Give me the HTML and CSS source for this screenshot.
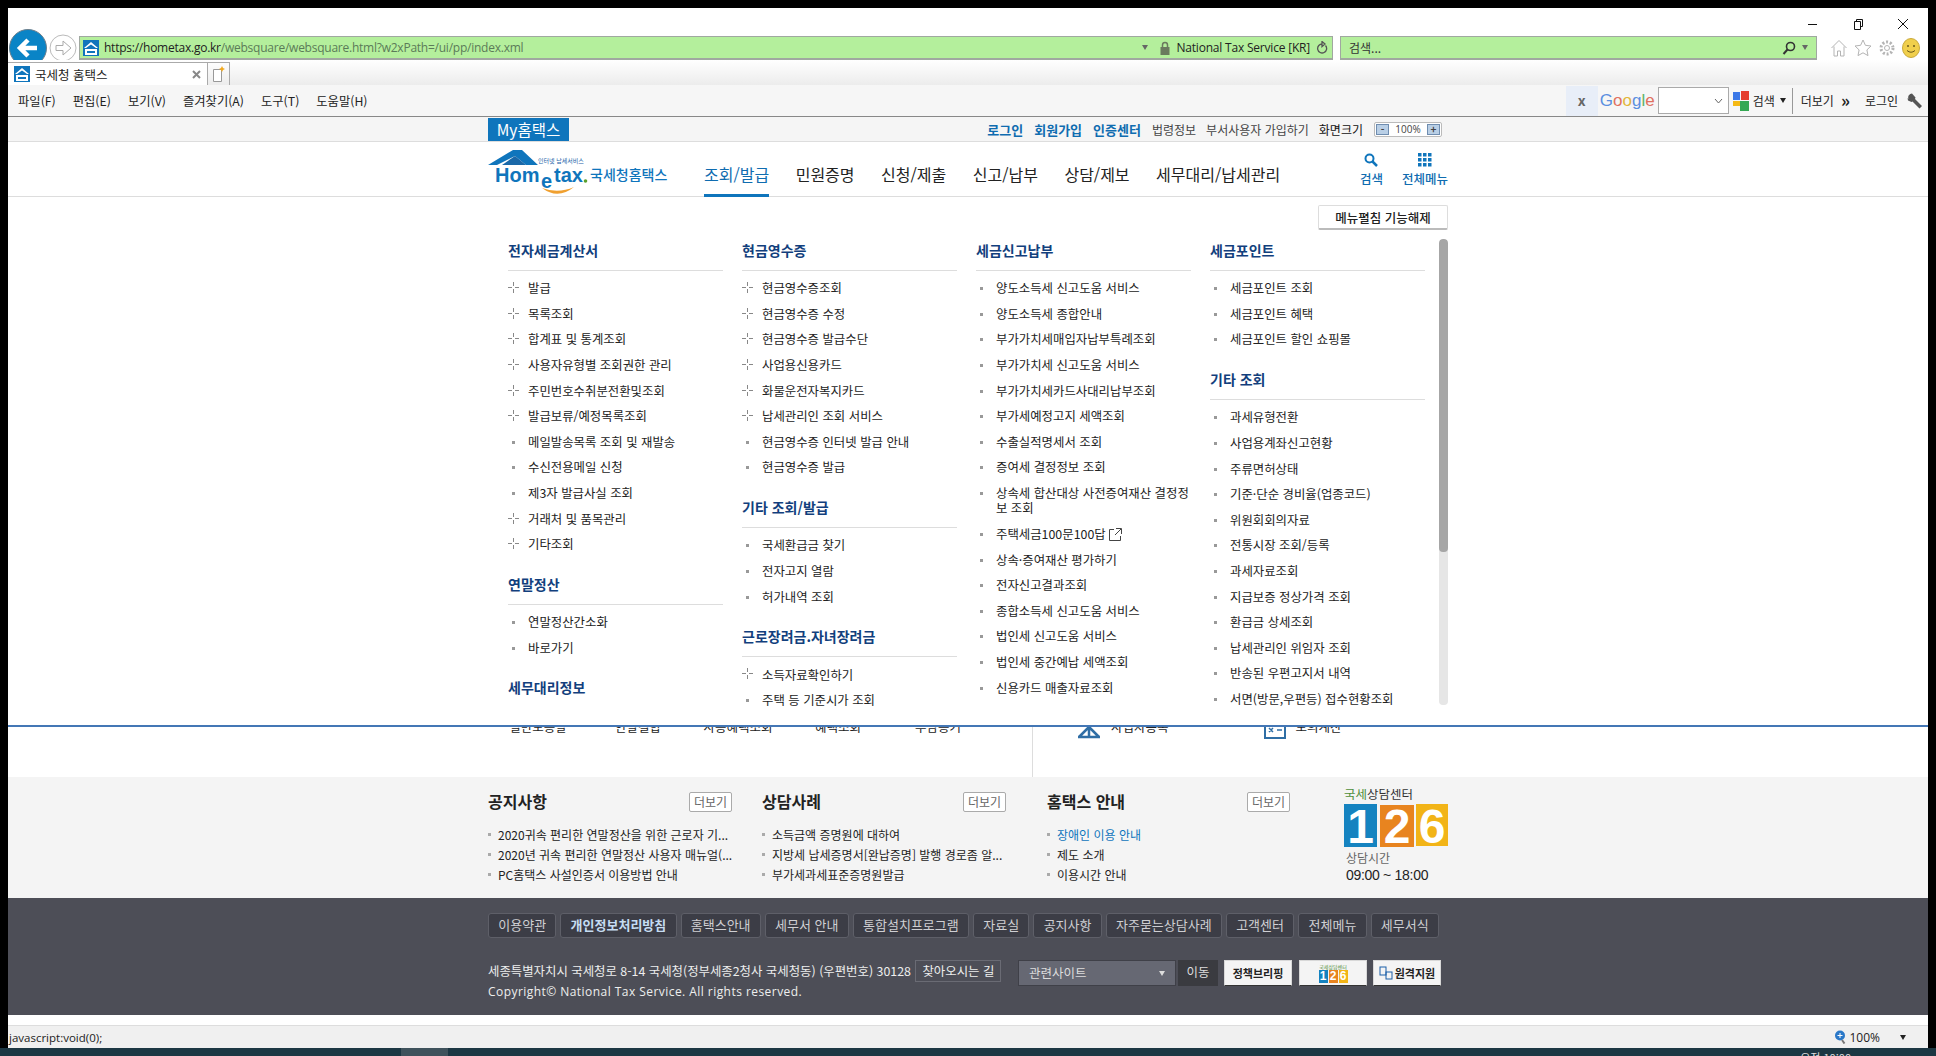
FILE: index.html
```html
<!DOCTYPE html>
<html lang="ko">
<head>
    <meta charset="utf-8">
    <link rel="stylesheet" href="styles.css">
    <title>국세청 홈택스</title>
</head>
<body>
<div class="window">
    <!-- browser chrome -->
    <div class="titlebar">
        <svg class="winbtn" width="12" height="12" viewBox="0 0 12 12"><path d="M1 6.5h9" stroke="#111" fill="none"/></svg>
        <svg class="winbtn" width="12" height="12" viewBox="0 0 12 12"><path d="M2.5 3.5h6v8h-6zM4.5 3.5v-2h6v7h-2" stroke="#111" fill="none"/></svg>
        <svg class="winbtn" width="12" height="12" viewBox="0 0 12 12"><path d="M1 1l10 10M11 1L1 11" stroke="#111" fill="none"/></svg>
    </div>
    <div class="toolbar">
        <svg class="back" width="38" height="38" viewBox="0 0 38 38"><circle cx="19" cy="19" r="18.5" fill="#0a84c6" stroke="#6d7f8c"/><path d="M28 19H12M19 11l-8 8 8 8" stroke="#fff" stroke-width="4.5" fill="none"/></svg>
        <svg class="forward" width="28" height="28" viewBox="0 0 28 28"><circle cx="14" cy="14" r="13" fill="#fff" stroke="#bbb"/><path d="M7 11.500h7V7l8 7-8 7v-4.500H7z" fill="#fff" stroke="#aaa"/></svg>
        <div class="addr">
            <svg class="favicon" width="16" height="16" viewBox="0 0 16 16"><rect width="16" height="16" fill="#0f75bc"/><path d="M1 8l7-6 7 6-2 0-5-3.500L3 8z" fill="#fff"/><rect x="2" y="9" width="12" height="6" fill="#fff"/><rect x="4" y="11" width="8" height="2" fill="#0f75bc"/></svg>
            <span class="url"><b>https://hometax.go.kr</b>/websquare/websquare.html?w2xPath=/ui/pp/index.xml</span>
            <span class="tri addr-tri"></span>
            <svg width="10" height="14" viewBox="0 0 10 14"><path d="M2.500 6V4a2.500 2.500 0 0 1 5 0v2" stroke="#6a7a5e" stroke-width="1.500" fill="none"/><rect x="0.500" y="6" width="9" height="8" fill="#6a7a5e"/></svg>
            <span class="cert">National Tax Service [KR]</span>
            <svg width="12" height="14" viewBox="0 0 12 14"><path d="M9.500 4.500a4.500 4.500 0 1 1-3-1.500M6 0.500v5l3-2.500z" stroke="#555" stroke-width="1.300" fill="none"/></svg>
        </div>
        <div class="searchbox">
            <span class="searchtext">검색...</span>
            <svg width="14" height="14" viewBox="0 0 14 14"><circle cx="8.500" cy="5.500" r="4" stroke="#333" stroke-width="1.600" fill="none"/><path d="M5.500 8.500L1.500 13" stroke="#333" stroke-width="2"/></svg>
            <span class="tri"></span>
        </div>
        <div class="tooltray">
            <svg width="18" height="18" viewBox="0 0 18 18"><path d="M1.500 9L9 1.500 16.500 9M4 7.500V17h3.500v-5h3v5H14V7.500" stroke="#b4b4b4" fill="#fff"/></svg>
            <svg width="18" height="18" viewBox="0 0 18 18"><path d="M9 1l2.400 5.300 5.600.7-4.100 3.900 1.100 5.700L9 13.800 4 16.600l1.100-5.700L1 7l5.600-.7z" stroke="#b4b4b4" fill="#fff"/></svg>
            <svg width="18" height="18" viewBox="0 0 18 18"><circle cx="9" cy="9" r="2.500" stroke="#b4b4b4" fill="none"/><circle cx="9" cy="9" r="6" stroke="#b4b4b4" stroke-width="3" stroke-dasharray="2 1.800" fill="none"/></svg>
            <svg width="18" height="20" viewBox="0 0 18 20"><ellipse cx="9" cy="10" rx="8.500" ry="9.500" fill="#f0cf4c" stroke="#c9a93a"/><circle cx="6" cy="8" r="1" fill="#6b5a1a"/><circle cx="12" cy="8" r="1" fill="#6b5a1a"/><path d="M5 12.500q4 3.500 8 0" stroke="#6b5a1a" fill="none"/></svg>
        </div>
    </div>
    <div class="tabrow">
        <div class="tab">
            <svg width="16" height="16" viewBox="0 0 16 16"><rect width="16" height="16" fill="#0f75bc"/><path d="M1 8l7-6 7 6-2 0-5-3.500L3 8z" fill="#fff"/><rect x="2" y="9" width="12" height="6" fill="#fff"/><rect x="4" y="11" width="8" height="2" fill="#0f75bc"/></svg>
            <span class="tabtitle">국세청 홈택스</span>
            <svg width="9" height="9" viewBox="0 0 9 9"><path d="M1 1l7 7M8 1L1 8" stroke="#888" stroke-width="2"/></svg>
        </div>
        <div class="newtab">
            <svg width="14" height="16" viewBox="0 0 14 16"><path d="M1.500 3.500h8v12h-8z" fill="#fff" stroke="#999"/><path d="M10 0l1 2 2 1-2 1-1 2-1-2-2-1 2-1z" fill="#f2a81d"/></svg>
        </div>
    </div>
    <div class="menubar">
        <div class="menus">
            <span>파일(F)</span><span>편집(E)</span><span>보기(V)</span><span>즐겨찾기(A)</span><span>도구(T)</span><span>도움말(H)</span>
        </div>
        <div class="gbar">
            <span class="gclose">x</span>
            <span class="glogo"><i class="g1">G</i><i class="g2">o</i><i class="g3">o</i><i class="g1">g</i><i class="g4">l</i><i class="g2">e</i></span>
            <span class="ginput"><svg width="9" height="6" viewBox="0 0 9 6"><path d="M1 1l3.500 4L8 1" stroke="#666" fill="none"/></svg></span>
            <svg width="16" height="20" viewBox="0 0 16 20"><rect x="0" y="1" width="7" height="8" fill="#3b78e7"/><rect x="8" y="0" width="8" height="9" fill="#e53f2e"/><rect x="0" y="10" width="7" height="5" fill="#f5b915"/><rect x="7" y="10" width="9" height="10" fill="#34a853"/></svg>
            <span class="gtext">검색</span>
            <span class="tri dark"></span>
            <span class="gsep"></span>
            <span class="gtext">더보기</span>
            <span class="gmore">»</span>
            <span class="gtext glogin">로그인</span>
            <svg width="16" height="16" viewBox="0 0 16 16"><path d="M5 0.500a4 4 0 0 0-3.500 5.500L0.500 5 1 7.500 4.500 9l1-.5 7 7 2.500-2.500-7-7 .5-1.500L5 0.500z" fill="#555"/></svg>
        </div>
    </div>

    <!-- page -->
    <div class="page">
        <div class="topstrip">
            <div class="wrap topstrip-in">
                <span class="myhome">My홈택스</span>
                <div class="toplinks">
                    <a class="strong">로그인</a><a class="strong">회원가입</a><a class="strong last">인증센터</a>
                    <a class="sep">법령정보</a><a class="sep">부서사용자 가입하기</a><a class="sep size">화면크기</a>
                    <span class="zoomctl"><i>-</i><em>100%</em><i>+</i></span>
                </div>
            </div>
        </div>
        <div class="header">
            <div class="wrap header-in">
                <svg class="logo" width="181" height="46" viewBox="0 0 181 46">
                    <path d="M0 15L25 0h9l16 15H38L27 6 9 15z" fill="#0f75bc"/>
                    <path d="M27 6L38 15H14z" fill="#1a68a8"/>
                    <path d="M54 38q16 12 32-1-16 7-32 1z" fill="#f0a030"/>
                    <text x="50" y="12.500" class="logo-small">인터넷 납세서비스</text>
                    <text x="7" y="32" class="logo-main">Hom</text>
                    <text x="53" y="38" class="logo-main">e</text>
                    <text x="66" y="32" class="logo-main">tax</text>
                    <circle cx="97.500" cy="31" r="1.800" fill="#5aa02c"/>
                    <text x="102" y="30" class="logo-kr">국세청홈택스</text>
                </svg>
                <div class="nav">
                    <a class="on">조회/발급</a><a>민원증명</a><a>신청/제출</a><a>신고/납부</a><a>상담/제보</a><a>세무대리/납세관리</a>
                </div>
                <div class="navicons">
                    <div class="navicon">
                        <svg width="14" height="14" viewBox="0 0 14 14"><circle cx="5.500" cy="5.500" r="4" stroke="#0f75bc" stroke-width="2" fill="none"/><path d="M8.500 8.500L13 13" stroke="#0f75bc" stroke-width="2.500"/></svg>
                        <span>검색</span>
                    </div>
                    <div class="navicon">
                        <svg width="14" height="14" viewBox="0 0 14 14" fill="#0f75bc"><rect x="0" y="0" width="3.500" height="3.500"/><rect x="5" y="0" width="3.500" height="3.500"/><rect x="10" y="0" width="3.500" height="3.500"/><rect x="0" y="5" width="3.500" height="3.500"/><rect x="5" y="5" width="3.500" height="3.500"/><rect x="10" y="5" width="3.500" height="3.500"/><rect x="0" y="10" width="3.500" height="3.500"/><rect x="5" y="10" width="3.500" height="3.500"/><rect x="10" y="10" width="3.500" height="3.500"/></svg>
                        <span>전체메뉴</span>
                    </div>
                </div>
            </div>
        </div>

        <div class="main">
            <div class="wrap quick">
                <div class="quick-left">
                    <span>일반모증발</span><span>안말결합</span><span>사용혜택조회</span><span>혜택조회</span><span>부담증거</span>
                </div>
                <div class="quick-right">
                    <svg width="24" height="22" viewBox="0 0 24 22"><path d="M1 20h22M12 2v18M12 10L2 20M12 10l10 10" stroke="#2f6ea5" stroke-width="2.500" fill="none"/></svg>
                    <span>사업자등록</span>
                    <svg class="calc" width="22" height="22" viewBox="0 0 22 22"><rect x="1" y="1" width="20" height="20" stroke="#2f6ea5" stroke-width="2" fill="none"/><path d="M5 11l4 4M9 11l-4 4M13 13h5" stroke="#2f6ea5" stroke-width="1.500"/></svg>
                    <span>모의계산</span>
                </div>
            </div>

            <!-- opened menu lies over the page -->
            <div class="mega">
                <div class="wrap">
                    <div class="mega-top"><button class="unfold">메뉴펼침 기능해제</button></div>
                    <div class="mega-body">
                        <div class="cols">
                            <div class="col">
                                <h3>전자세금계산서</h3>
                                <ul>
                                    <li class="plus">발급</li>
                                    <li class="plus">목록조회</li>
                                    <li class="plus">합계표 및 통계조회</li>
                                    <li class="plus">사용자유형별 조회권한 관리</li>
                                    <li class="plus">주민번호수취분전환및조회</li>
                                    <li class="plus">발급보류/예정목록조회</li>
                                    <li>메일발송목록 조회 및 재발송</li>
                                    <li>수신전용메일 신청</li>
                                    <li>제3자 발급사실 조회</li>
                                    <li class="plus">거래처 및 품목관리</li>
                                    <li class="plus">기타조회</li>
                                </ul>
                                <h3>연말정산</h3>
                                <ul>
                                    <li>연말정산간소화</li>
                                    <li>바로가기</li>
                                </ul>
                                <h3 class="noline">세무대리정보</h3>
                            </div>
                            <div class="col">
                                <h3>현금영수증</h3>
                                <ul>
                                    <li class="plus">현금영수증조회</li>
                                    <li class="plus">현금영수증 수정</li>
                                    <li class="plus">현금영수증 발급수단</li>
                                    <li class="plus">사업용신용카드</li>
                                    <li class="plus">화물운전자복지카드</li>
                                    <li class="plus">납세관리인 조회 서비스</li>
                                    <li>현금영수증 인터넷 발급 안내</li>
                                    <li>현금영수증 발급</li>
                                </ul>
                                <h3>기타 조회/발급</h3>
                                <ul>
                                    <li>국세환급금 찾기</li>
                                    <li>전자고지 열람</li>
                                    <li>허가내역 조회</li>
                                </ul>
                                <h3>근로장려금.자녀장려금</h3>
                                <ul>
                                    <li class="plus">소득자료확인하기</li>
                                    <li>주택 등 기준시가 조회</li>
                                </ul>
                            </div>
                            <div class="col">
                                <h3>세금신고납부</h3>
                                <ul>
                                    <li>양도소득세 신고도움 서비스</li>
                                    <li>양도소득세 종합안내</li>
                                    <li>부가가치세매입자납부특례조회</li>
                                    <li>부가가치세 신고도움 서비스</li>
                                    <li>부가가치세카드사대리납부조회</li>
                                    <li>부가세예정고지 세액조회</li>
                                    <li>수출실적명세서 조회</li>
                                    <li>증여세 결정정보 조회</li>
                                    <li>상속세 합산대상 사전증여재산 결정정보 조회</li>
                                    <li>주택세금100문100답
                                        <svg class="ext" width="13" height="13" viewBox="0 0 13 13"><path d="M5 1.500H.5v11h11V8M7 .5h5.500V6M12 1L6 7" stroke="#444" fill="none"/></svg>
                                    </li>
                                    <li>상속·증여재산 평가하기</li>
                                    <li>전자신고결과조회</li>
                                    <li>종합소득세 신고도움 서비스</li>
                                    <li>법인세 신고도움 서비스</li>
                                    <li>법인세 중간예납 세액조회</li>
                                    <li>신용카드 매출자료조회</li>
                                </ul>
                            </div>
                            <div class="col">
                                <h3>세금포인트</h3>
                                <ul>
                                    <li>세금포인트 조회</li>
                                    <li>세금포인트 혜택</li>
                                    <li>세금포인트 할인 쇼핑몰</li>
                                </ul>
                                <h3>기타 조회</h3>
                                <ul>
                                    <li>과세유형전환</li>
                                    <li>사업용계좌신고현황</li>
                                    <li>주류면허상태</li>
                                    <li>기준·단순 경비율(업종코드)</li>
                                    <li>위원회회의자료</li>
                                    <li>전통시장 조회/등록</li>
                                    <li>과세자료조회</li>
                                    <li>지급보증 정상가격 조회</li>
                                    <li>환급금 상세조회</li>
                                    <li>납세관리인 위임자 조회</li>
                                    <li>반송된 우편고지서 내역</li>
                                    <li>서면(방문,우편등) 접수현황조회</li>
                                </ul>
                            </div>
                        </div>
                        <div class="scrolltrack"><div class="scrollthumb"></div></div>
                    </div>
                </div>
            </div>
        </div>

        <div class="notice">
            <div class="wrap notice-in">
                <div class="board b1">
                    <div class="board-head"><h4>공지사항</h4><a class="more">더보기</a></div>
                    <ul>
                        <li>2020귀속 편리한 연말정산을 위한 근로자 기...</li>
                        <li>2020년 귀속 편리한 연말정산 사용자 매뉴얼(...</li>
                        <li>PC홈택스 사설인증서 이용방법 안내</li>
                    </ul>
                </div>
                <div class="board b2">
                    <div class="board-head"><h4>상담사례</h4><a class="more">더보기</a></div>
                    <ul>
                        <li>소득금액 증명원에 대하여</li>
                        <li>지방세 납세증명서[완납증명] 발행 경로좀 알...</li>
                        <li>부가세과세표준증명원발급</li>
                    </ul>
                </div>
                <div class="board b3">
                    <div class="board-head"><h4>홈택스 안내</h4><a class="more">더보기</a></div>
                    <ul>
                        <li class="hl">장애인 이용 안내</li>
                        <li>제도 소개</li>
                        <li>이용시간 안내</li>
                    </ul>
                </div>
                <div class="center126">
                    <svg width="104" height="58" viewBox="0 0 104 58">
                        <text x="0" y="10" class="c-title"><tspan fill="#4f8f3a">국세</tspan>상담센터</text>
                        <rect x="0" y="15" width="33" height="43" fill="#1583c0"/>
                        <rect x="36" y="16" width="34" height="42" fill="#e8841f"/>
                        <rect x="72" y="15" width="32" height="42" fill="#f2b417"/>
                        <text x="16.500" y="54" class="c-num">1</text>
                        <text x="53" y="54" class="c-num">2</text>
                        <text x="88" y="54" class="c-num">6</text>
                    </svg>
                    <p class="c-time">상담시간</p>
                    <p class="c-hour">09:00 ~ 18:00</p>
                </div>
            </div>
        </div>

        <div class="foot">
            <div class="wrap">
                <div class="footlinks">
                    <a>이용약관</a><a class="bold">개인정보처리방침</a><a>홈택스안내</a><a>세무서 안내</a><a>통합설치프로그램</a><a>자료실</a><a>공지사항</a><a>자주묻는상담사례</a><a>고객센터</a><a>전체메뉴</a><a>세무서식</a>
                </div>
                <div class="footinfo">
                    <div class="addrtext">
                        <p>세종특별자치시 국세청로 8-14 국세청(정부세종2청사 국세청동) (우편번호) 30128 <span class="findway">찾아오시는 길</span></p>
                        <p class="copy">Copyright© National Tax Service. All rights reserved.</p>
                    </div>
                    <div class="sitesel">관련사이트<span class="tri light"></span></div>
                    <a class="go">이동</a>
                    <a class="whitebtn bri">정책브리핑</a>
                    <a class="whitebtn mini126">
                        <span class="mini-title">국세상담센터</span>
                        <span class="mini-tiles"><i class="m1">1</i><i class="m2">2</i><i class="m3">6</i></span>
                    </a>
                    <a class="whitebtn remote">
                        <svg width="14" height="14" viewBox="0 0 14 14"><rect x="1" y="1" width="6" height="8" fill="none" stroke="#1a5fa8"/><rect x="7" y="6" width="6" height="7" fill="none" stroke="#1a5fa8"/></svg>원격지원
                    </a>
                </div>
            </div>
        </div>
        <div class="gap"></div>
    </div>

    <div class="statusbar">
        <span>javascript:void(0);</span>
        <div class="zoomstat">
            <svg width="12" height="14" viewBox="0 0 12 14"><circle cx="6" cy="5.500" r="5" fill="#2a78c8"/><path d="M6 3v5M3.500 5.500h5" stroke="#fff"/><path d="M8 10l2.500 3.500" stroke="#777" stroke-width="2"/></svg>
            <span>100%</span>
            <span class="tri dark"></span>
        </div>
    </div>
</div>
<div class="taskbar"><div class="taskitem"></div><span class="clock">오전 10:00</span></div>
</body>
</html>
```

FILE: styles.css
```css
*{
    box-sizing: border-box;
}
html,body{
    margin: 0;
    height: 100%;
    overflow: hidden;
}
body{
    background: #000;
    font-family: "Noto Sans CJK KR", "Noto Sans", sans-serif;
    font-size: 12.4px;
    color: #222;
}
ul{
    list-style: none;
    margin: 0;
    padding: 0;
}
p,h3,h4{
    margin: 0;
}
.window{
    margin: 8px 8px 0 8px;
    height: 1040px;
    background: #fff;
    display: flex;
    flex-direction: column;
    overflow: hidden;
}
.wrap{
    width: 960px;
    margin: 0 auto;
}
.tri{
    display: inline-block;
    width: 0;
    height: 0;
    border-left: 3.5px solid transparent;
    border-right: 3.5px solid transparent;
    border-top: 5px solid #666;
}
.tri.dark{
    border-top-color: #222;
}
.tri.light{
    border-top-color: #ddd;
}

/* browser chrome */
.titlebar{
    height: 27px;
    display: flex;
    justify-content: flex-end;
    align-items: center;
    gap: 33px;
    padding: 4px 19px 0 0;
}
.toolbar{
    height: 24px;
    display: flex;
    align-items: center;
    flex: none;
    margin-top: 1px;
}
.back{
    flex: none;
    margin-left: 1px;
}
.forward{
    flex: none;
    margin: 0 2px 0 2px;
}
.addr{
    width: 1254px;
    height: 24px;
    background: #b4ef9c;
    border: 1px solid #a0a8a0;
    border-bottom-width: 2px;
    display: flex;
    align-items: center;
    gap: 6px;
    padding: 0 4px 0 3px;
}
.url{
    flex: 1;
    font-family: "Open Sans", sans-serif;
    font-size: 12px;
    letter-spacing: -0.24px;
    color: #5b7b58;
    white-space: nowrap;
    margin-left: -1px;
}
.url b{
    font-weight: normal;
    color: #222;
}
.addr-tri{
    margin-right: 6px;
}
.cert{
    font-family: "Open Sans", sans-serif;
    font-size: 12px;
    letter-spacing: -0.2px;
    color: #222;
}
.searchbox{
    width: 477px;
    height: 24px;
    margin-left: 7px;
    background: #b4ef9c;
    border: 1px solid #a0a8a0;
    border-bottom-width: 2px;
    display: flex;
    align-items: center;
    gap: 6px;
    padding: 0 8px;
    flex: none;
}
.searchtext{
    flex: 1;
    font-size: 12px;
    color: #333;
}
.tooltray{
    display: flex;
    align-items: center;
    gap: 6px;
    margin-left: 13px;
    flex: none;
}
.tabrow{
    height: 25px;
    flex: none;
    padding-top: 2px;
    background: linear-gradient(#fff, #ececec);
    display: flex;
}
.tab{
    width: 200px;
    background: #fff;
    border-top: 1px solid #aaa;
    border-right: 1px solid #aaa;
    display: flex;
    align-items: center;
    padding: 0 6px 0 6px;
    gap: 5px;
}
.tabtitle{
    flex: 1;
    font-size: 12.5px;
}
.newtab{
    width: 22px;
    border-top: 1px solid #aaa;
    border-right: 1px solid #aaa;
    display: flex;
    justify-content: center;
    align-items: center;
}
.menubar{
    height: 32px;
    flex: none;
    background: #f6f6f6;
    border-bottom: 1px solid #888;
    display: flex;
    align-items: center;
    justify-content: space-between;
}
.menus{
    display: flex;
    gap: 17px;
    padding-left: 10px;
    font-size: 12.3px;
}
.gbar{
    display: flex;
    align-items: center;
    height: 100%;
    padding-right: 5px;
    font-size: 12px;
}
.gclose{
    width: 32px;
    height: 30px;
    background: #e8eef8;
    color: #666;
    font-size: 14px;
    font-weight: bold;
    text-align: center;
    line-height: 28px;
}
.glogo{
    font-family: "Liberation Sans", sans-serif;
    font-size: 17px;
    margin: 0 3px 0 2px;
}
.glogo i{
    font-style: normal;
}
.g1{
    color: #5b8fe0;
}
.g2{
    color: #e0705f;
}
.g3{
    color: #e3b63a;
}
.g4{
    color: #5fb36b;
}
.ginput{
    width: 71px;
    height: 27px;
    background: #fff;
    border: 1px solid #aaa;
    display: flex;
    align-items: center;
    justify-content: flex-end;
    padding-right: 5px;
    margin-right: 4px;
}
.gtext{
    margin-left: 4px;
}
.gbar .tri{
    margin-left: 5px;
}
.gsep{
    width: 1px;
    height: 26px;
    background: #999;
    margin: 0 4px 0 6px;
}
.gmore{
    font-size: 17px;
    font-weight: bold;
    margin: -3px 0 0 7px;
}
.glogin{
    margin: 0 9px 0 15px;
}

/* page */
.page{
    flex: 1;
    display: flex;
    flex-direction: column;
    min-height: 0;
}
.topstrip{
    height: 25px;
    flex: none;
    background: #f5f5f5;
    border-bottom: 1px solid #ddd;
}
.topstrip-in{
    height: 24px;
    display: flex;
    justify-content: space-between;
    align-items: flex-end;
}
.myhome{
    width: 81px;
    height: 23px;
    background: #0f75bc;
    color: #fff;
    font-size: 15.5px;
    text-align: center;
    line-height: 22px;
}
.toplinks{
    display: flex;
    align-items: center;
    height: 24px;
    font-size: 12px;
    padding-right: 6px;
    color: #444;
}
.toplinks a{
    margin-right: 10px;
}
.toplinks .strong{
    color: #0f6cb0;
    font-weight: bold;
    font-size: 13px;
    margin-right: 11px;
}
.toplinks .strong.last{
    margin-right: 11px;
}
.toplinks .size{
    color: #111;
    margin-right: 11px;
}
.zoomctl{
    display: flex;
    align-items: center;
    height: 15px;
    width: 68px;
    border: 1px solid #bbb;
    border-radius: 2px;
    justify-content: space-between;
    padding: 0 1px;
    font-size: 10px;
    background: #fff;
}
.zoomctl i{
    width: 13px;
    height: 11px;
    background: #b9cfe6;
    border: 1px solid #6f8db0;
    font-style: normal;
    font-weight: bold;
    text-align: center;
    line-height: 8px;
}
.zoomctl em{
    font-style: normal;
    font-family: "Open Sans", sans-serif;
}
.header{
    height: 55px;
    flex: none;
    border-bottom: 1px solid #ddd;
}
.header-in{
    height: 54px;
    display: flex;
}
.logo{
    flex: none;
    margin-top: 8px;
}
.logo-small{
    font-size: 6px;
    fill: #1a5fa8;
}
.logo-main{
    font-family: "Liberation Sans", sans-serif;
    font-size: 20px;
    font-weight: bold;
    fill: #0f75bc;
}
.logo-kr{
    font-size: 14px;
    font-weight: 500;
    fill: #0f75bc;
}
.nav{
    display: flex;
    gap: 26.500px;
    margin-left: 35px;
    font-size: 16px;
    color: #222;
}
.nav a{
    height: 55px;
    padding-top: 19px;
    line-height: 26px;
}
.nav .on{
    color: #0f6cb0;
    border-bottom: 3px solid #0f75bc;
}
.navicons{
    display: flex;
    margin-left: auto;
    gap: 19px;
    font-size: 12.5px;
    font-weight: 500;
    color: #0f6cb0;
}
.navicon{
    display: flex;
    flex-direction: column;
    align-items: center;
    padding-top: 11px;
    line-height: 18px;
}
.navicon span{
    margin-top: 3px;
}
.main{
    flex: 1;
    position: relative;
    display: flex;
    align-items: flex-end;
    min-height: 0;
    background: #fff;
}
.quick{
    display: flex;
    height: 60px;
}
.quick-left{
    width: 545px;
    display: grid;
    grid-template-columns: repeat(5, 100px);
    text-align: center;
    border-right: 1px solid #ddd;
    font-size: 12.5px;
    height: 100%;
    white-space: nowrap;
}
.quick-left span{
    line-height: 20px;
}
.quick-right{
    display: flex;
    padding-left: 44px;
    font-size: 12.5px;
    align-items: flex-start;
    gap: 10px;
    line-height: 20px;
}
.calc{
    margin-left: 85px;
}
.mega{
    position: absolute;
    left: 0;
    right: 0;
    top: 0;
    height: 530px;
    background: #fff;
    border-bottom: 2px solid #4477b5;
    overflow: hidden;
}
.mega-top{
    display: flex;
    justify-content: flex-end;
    padding-top: 8px;
    height: 42px;
}
.unfold{
    width: 130px;
    height: 25px;
    background: #fff;
    border: 1px solid #ddd;
    border-bottom: 2px solid #bbb;
    border-radius: 2px;
    font-family: inherit;
    font-size: 12.5px;
    font-weight: 500;
    color: #222;
    padding: 0;
}
.mega-body{
    display: flex;
    justify-content: space-between;
    height: 470px;
}
.cols{
    display: grid;
    grid-template-columns: repeat(4, 215px);
    column-gap: 19px;
    margin-left: 20px;
    overflow: hidden;
    padding-top: 1px;
}
.col h3{
    font-size: 14px;
    font-weight: 700;
    color: #123f7d;
    line-height: 20px;
    padding-bottom: 10px;
    border-bottom: 1px solid #ddd;
    height: 31px;
}
.col h3.noline{
    border-bottom: none;
}
.col ul{
    margin: 5.200px 0 16.200px 0;
}
.col li{
    min-height: 25.600px;
    padding: 5.100px 0 5.100px 20px;
    line-height: 15.400px;
    position: relative;
    color: #222;
}
.col li::before{
    content: "";
    position: absolute;
    left: 4px;
    top: 11px;
    width: 3px;
    height: 3px;
    background: #999;
}
.col li.plus::before{
    left: 0;
    top: 6px;
    width: 11px;
    height: 11px;
    background:
        linear-gradient(#888,#888) 0 5px/4px 1px no-repeat,
        linear-gradient(#888,#888) 7px 5px/4px 1px no-repeat,
        linear-gradient(#888,#888) 5px 0/1px 4px no-repeat,
        linear-gradient(#888,#888) 5px 7px/1px 4px no-repeat;
}
.ext{
    vertical-align: -2px;
}
.scrolltrack{
    width: 9px;
    height: 466px;
    background: #e6e6e6;
    border-radius: 4px;
    overflow: hidden;
}
.scrollthumb{
    height: 313px;
    background: #a6a6a6;
    border-radius: 4px;
}

.notice{
    height: 121px;
    flex: none;
    background: #f4f4f4;
}
.notice-in{
    display: flex;
    height: 100%;
    position: relative;
}
.board h4{
    font-size: 16px;
    font-weight: 700;
    color: #222;
    line-height: 24px;
    margin-top: -2px;
}
.board-head{
    display: flex;
    justify-content: space-between;
    align-items: center;
    padding-top: 12px;
    height: 38px;
}
.more{
    width: 43px;
    height: 20px;
    border: 1px solid #aaa;
    border-radius: 2px;
    font-size: 12px;
    color: #666;
    text-align: center;
    line-height: 17px;
    background: #fff;
}
.b1{
    width: 244px;
}
.b2{
    width: 244px;
    margin-left: 30px;
}
.b3{
    width: 243px;
    margin-left: 41px;
}
.board ul{
    margin-top: 10px;
}
.board li{
    height: 20px;
    line-height: 20px;
    padding-left: 10px;
    font-size: 12px;
    white-space: nowrap;
    position: relative;
    color: #222;
}
.board li::before{
    content: "";
    position: absolute;
    left: 0;
    top: 8px;
    width: 3px;
    height: 3px;
    background: #aaa;
}
.board li.hl{
    color: #0f75bc;
}
.center126{
    margin-left: auto;
    width: 104px;
    padding-top: 12px;
}
.center126 svg{
    display: block;
}
.c-title{
    font-size: 12.500px;
    fill: #333;
}
.c-num{
    font-family: "Liberation Sans", sans-serif;
    font-size: 48px;
    font-weight: bold;
    fill: #fff;
    text-anchor: middle;
}
.c-time{
    font-size: 12px;
    color: #666;
    line-height: 16px;
    margin: 3px 0 0 2px;
}
.c-hour{
    font-family: "Liberation Sans", sans-serif;
    font-size: 14px;
    color: #222;
    line-height: 18px;
    white-space: nowrap;
    letter-spacing: -0.3px;
    margin-left: 2px;
}

.foot{
    height: 117px;
    flex: none;
    background: #4d4e57;
    padding-top: 15px;
}
.footlinks{
    display: flex;
    gap: 4px;
}
.footlinks a{
    flex: none;
    height: 25px;
    padding: 0 9.250px;
    line-height: 22px;
    font-size: 13px;
    color: #cfcfd3;
    background: #3c3d46;
    border: 1px solid #5e5f68;
    border-radius: 3px;
    white-space: nowrap;
}
.footlinks .bold{
    color: #c5dcf2;
    font-weight: 700;
}
.footinfo{
    display: flex;
    align-items: flex-start;
    margin-top: 22px;
}
.addrtext{
    width: 530px;
    font-size: 12.400px;
    color: #eee;
    line-height: 22px;
    white-space: nowrap;
}
.copy{
    font-family: "Open Sans", sans-serif;
    font-size: 12px;
    letter-spacing: 0.45px;
    line-height: 18px;
    margin-top: 1px;
}
.findway{
    display: inline-block;
    height: 22px;
    padding: 0 6px;
    margin-left: 1px;
    border: 1px solid #6a6b74;
    line-height: 20px;
}
.sitesel{
    width: 158px;
    height: 26px;
    background: #666873;
    border: 1px solid #3f4048;
    color: #ddd;
    font-size: 12.500px;
    line-height: 24px;
    padding: 0 10px;
    display: flex;
    justify-content: space-between;
    align-items: center;
}
.go{
    width: 40px;
    height: 26px;
    margin-left: 2px;
    background: #3a3b40;
    color: #ddd;
    font-size: 12.500px;
    text-align: center;
    line-height: 24px;
}
.whitebtn{
    width: 68px;
    height: 26px;
    background: #f4f4f4;
    border: 1px solid #d8d8d8;
    border-bottom-color: #333;
    margin-left: 6px;
    display: flex;
    justify-content: center;
    align-items: center;
    font-size: 11px;
    font-weight: 700;
    color: #222;
    white-space: nowrap;
    gap: 2px;
}
.mini126{
    flex-direction: column;
    gap: 0;
    margin-left: 7px;
}
.mini-title{
    font-size: 5px;
    line-height: 7px;
    font-weight: normal;
    color: #4f8f3a;
}
.mini-tiles{
    display: flex;
    gap: 1px;
}
.mini-tiles i{
    width: 9px;
    height: 13px;
    color: #fff;
    font-family: "Liberation Sans", sans-serif;
    font-style: normal;
    font-size: 12px;
    line-height: 13px;
    text-align: center;
}
.m1{
    background: #1583c0;
}
.m2{
    background: #e8841f;
}
.m3{
    background: #f2b417;
}
.gap{
    height: 11px;
    flex: none;
    background: #fff;
    border-bottom: 1px solid #ddd;
}
.statusbar{
    height: 22px;
    flex: none;
    background: #f0f0f0;
    display: flex;
    justify-content: space-between;
    align-items: center;
    padding: 0 22px 0 1px;
    font-family: "Open Sans", sans-serif;
    font-size: 11.500px;
    color: #222;
}
.zoomstat{
    display: flex;
    align-items: center;
    gap: 3px;
    font-size: 12px;
}
.zoomstat .tri{
    margin-left: 17px;
}
.taskbar{
    height: 8px;
    background: #1c3743;
    color: #ddd;
    font-size: 11px;
    display: flex;
    overflow: hidden;
    padding-left: 401px;
    justify-content: space-between;
}
.taskitem{
    width: 47px;
    height: 8px;
    background: #3f525c;
}
.clock{
    line-height: 8px;
    margin-top: 5px;
    padding-right: 85px;
}
```
